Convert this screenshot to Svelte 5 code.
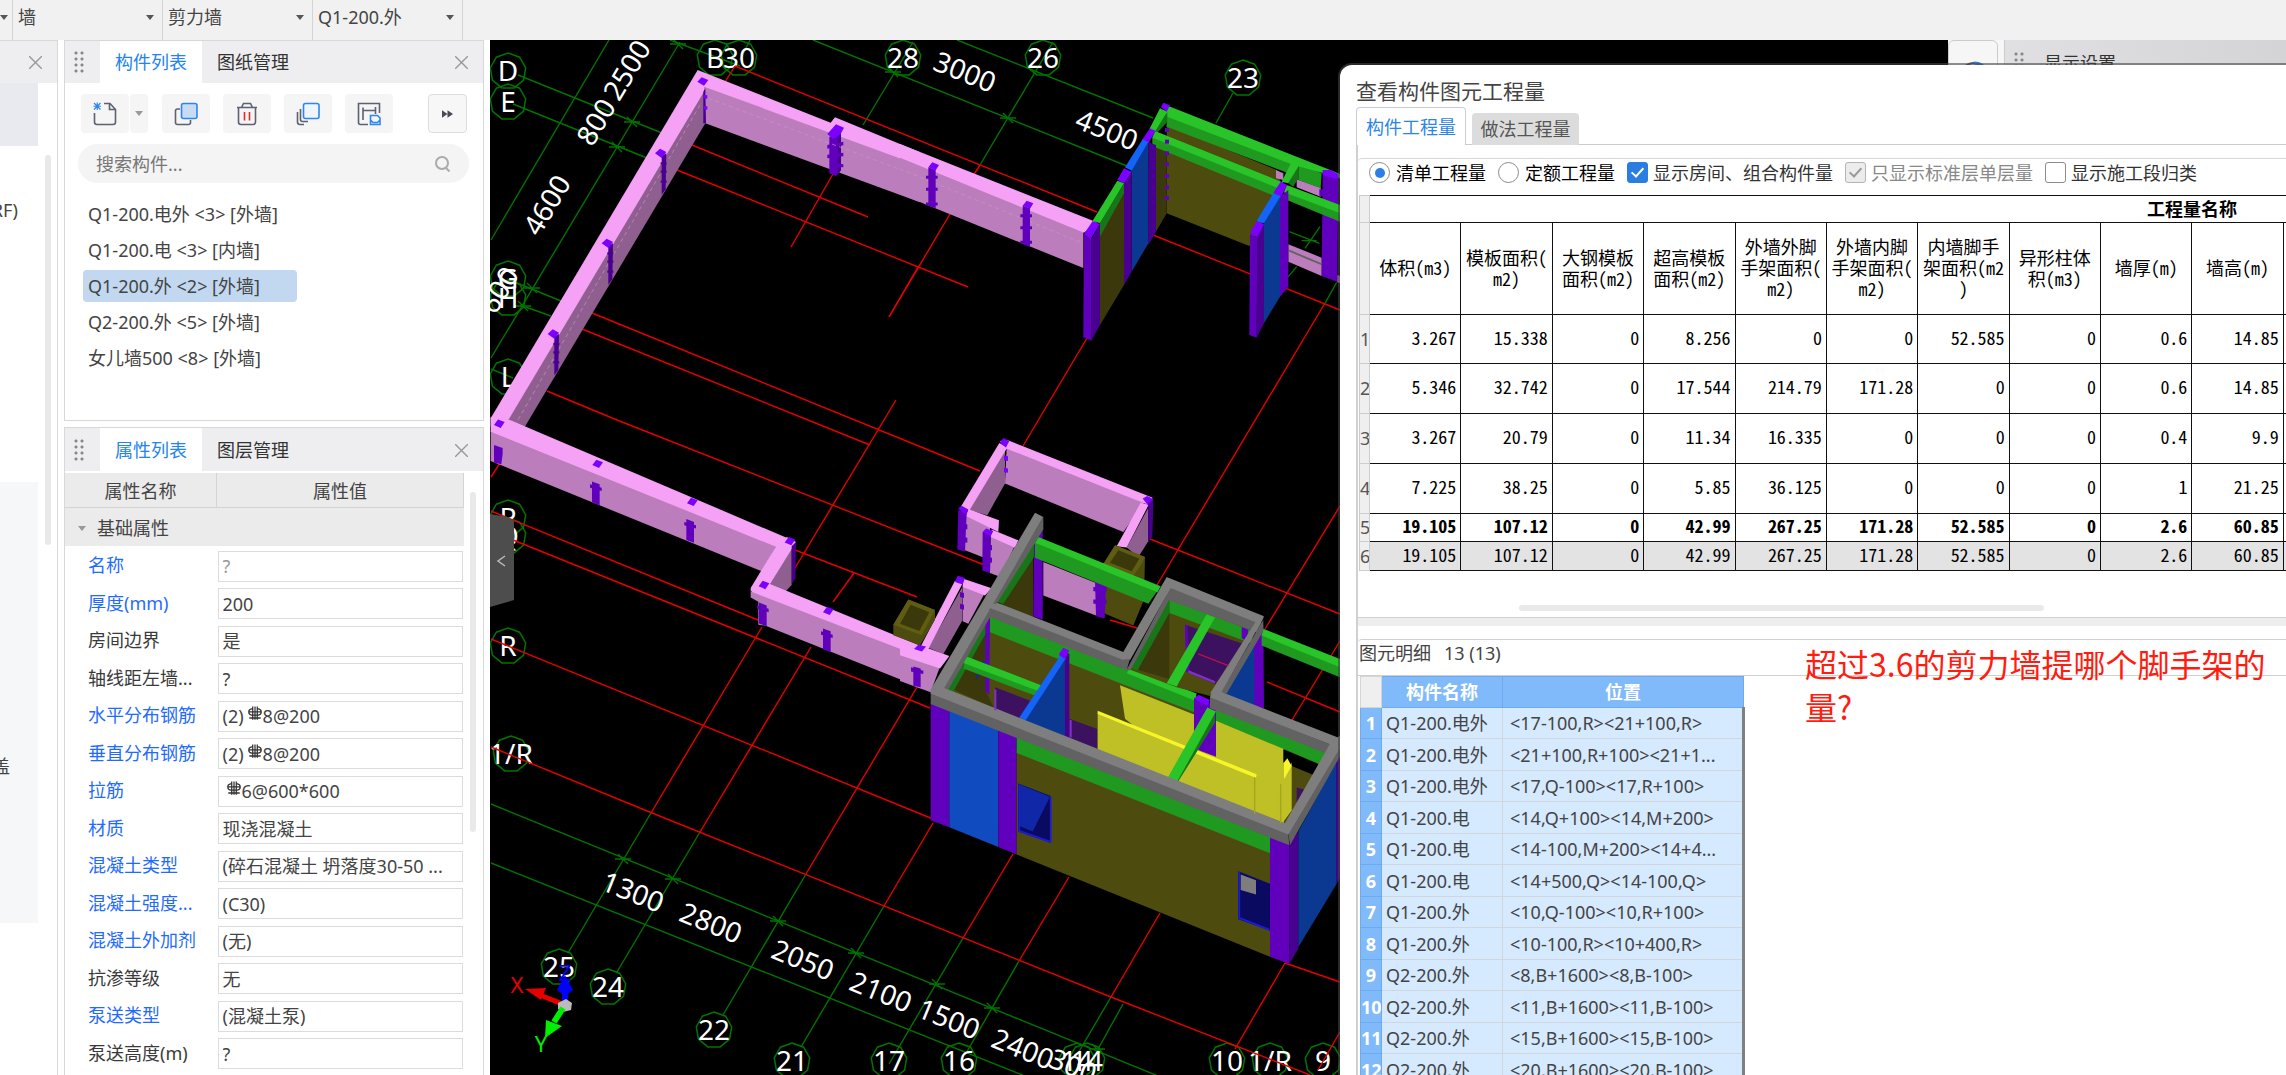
<script>
  const combos = ['墙', '剪力墙', 'Q1-200.外'];

  const components = [
    'Q1-200.电外 <3> [外墙]',
    'Q1-200.电 <3> [内墙]',
    'Q1-200.外 <2> [外墙]',
    'Q2-200.外 <5> [外墙]',
    '女儿墙500 <8> [外墙]',
  ];
  let selected = 2;

  const props = [
    { name: '名称', value: '?', blue: true, dim: true },
    { name: '厚度(mm)', value: '200', blue: true },
    { name: '房间边界', value: '是' },
    { name: '轴线距左墙...', value: '?' },
    { name: '水平分布钢筋', prefix: '(2)', rebar: true, value: '8@200', blue: true },
    { name: '垂直分布钢筋', prefix: '(2)', rebar: true, value: '8@200', blue: true },
    { name: '拉筋', rebar: true, value: '6@600*600', blue: true },
    { name: '材质', value: '现浇混凝土', blue: true },
    { name: '混凝土类型', value: '(碎石混凝土 坍落度30-50 ...', blue: true },
    { name: '混凝土强度...', value: '(C30)', blue: true },
    { name: '混凝土外加剂', value: '(无)', blue: true },
    { name: '抗渗等级', value: '无' },
    { name: '泵送类型', value: '(混凝土泵)', blue: true },
    { name: '泵送高度(m)', value: '?' },
    { name: '', value: '' },
  ];

  const heads = [
    ['体积(m3)'],
    ['模板面积(', 'm2)'],
    ['大钢模板', '面积(m2)'],
    ['超高模板', '面积(m2)'],
    ['外墙外脚', '手架面积(', 'm2)'],
    ['外墙内脚', '手架面积(', 'm2)'],
    ['内墙脚手', '架面积(m2', ')'],
    ['异形柱体', '积(m3)'],
    ['墙厚(m)'],
    ['墙高(m)'],
  ];
  const quantities = [
    ['3.267', '15.338', '0', '8.256', '0', '0', '52.585', '0', '0.6', '14.85'],
    ['5.346', '32.742', '0', '17.544', '214.79', '171.28', '0', '0', '0.6', '14.85'],
    ['3.267', '20.79', '0', '11.34', '16.335', '0', '0', '0', '0.4', '9.9'],
    ['7.225', '38.25', '0', '5.85', '36.125', '0', '0', '0', '1', '21.25'],
    ['19.105', '107.12', '0', '42.99', '267.25', '171.28', '52.585', '0', '2.6', '60.85'],
    ['19.105', '107.12', '0', '42.99', '267.25', '171.28', '52.585', '0', '2.6', '60.85'],
  ];

  const details = [
    ['Q1-200.电外', '<17-100,R><21+100,R>'],
    ['Q1-200.电外', '<21+100,R+100><21+1...'],
    ['Q1-200.电外', '<17,Q-100><17,R+100>'],
    ['Q1-200.电', '<14,Q+100><14,M+200>'],
    ['Q1-200.电', '<14-100,M+200><14+4...'],
    ['Q1-200.电', '<14+500,Q><14-100,Q>'],
    ['Q1-200.外', '<10,Q-100><10,R+100>'],
    ['Q1-200.外', '<10-100,R><10+400,R>'],
    ['Q2-200.外', '<8,B+1600><8,B-100>'],
    ['Q2-200.外', '<11,B+1600><11,B-100>'],
    ['Q2-200.外', '<15,B+1600><15,B-100>'],
    ['Q2-200.外', '<20,B+1600><20,B-100>'],
  ];

  // Axis grid: [x1, y1, x2, y2]
  const greenLines = [
    [609, 40, 491, 240], [680, 42, 491, 358], [518, 75, 662, 133], [513, 104, 647, 158],
    [512, 281, 561, 301], [520, 305, 551, 316], [491, 369, 513, 378], [670, 40, 740, 66],
    [813, 40, 1127, 166], [957, 40, 1153, 118], [1053, 42, 980, 165], [913, 42, 863, 125],
    [750, 40, 740, 60], [1233, 93, 1216, 123],
    [491, 804, 1163, 1078], [491, 863, 1025, 1076],
    [651, 813, 568, 953], [700, 832, 617, 972], [806, 874, 723, 1015], [884, 906, 801, 1047],
    [963, 938, 889, 1064], [1019, 961, 965, 1055], [1111, 997, 1077, 1055], [1123, 1004, 1097, 1051],
  ];
  const redLines = [
    [725, 82, 735, 66], [735, 66, 1097, 212], [692, 145, 868, 217], [677, 170, 968, 287],
    [833, 174, 791, 247], [980, 165, 973, 176], [950, 214, 889, 317], [918, 267, 889, 317],
    [592, 313, 980, 471], [1150, 539, 1340, 614], [582, 329, 870, 445], [547, 391, 617, 420],
    [617, 420, 987, 566], [1267, 682, 1340, 712], [795, 550, 917, 597], [896, 400, 795, 568],
    [762, 627, 651, 813], [854, 573, 833, 602], [811, 647, 700, 832], [917, 687, 806, 874],
    [933, 823, 884, 906], [1013, 854, 963, 938], [1069, 877, 1019, 961], [1160, 913, 1111, 997],
    [1285, 963, 1235, 1049], [1340, 1032, 1318, 1070], [491, 477, 500, 463], [491, 511, 758, 620],
    [513, 540, 930, 708], [491, 639, 933, 819], [491, 747, 652, 813], [652, 813, 1111, 997],
    [1111, 997, 1310, 1075], [1087, 338, 1023, 446], [1325, 303, 1157, 585], [1340, 506, 1265, 629],
    [1340, 641, 1292, 720], [1153, 235, 1340, 310], [1285, 963, 1340, 982], [1110, 620, 1137, 628],
  ];
  const ticks = [
    [632, 122], [617, 147], [532, 288], [523, 306], [678, 44], [893, 72], [1008, 118],
    [623, 859], [673, 879], [778, 921], [856, 953], [937, 984], [992, 1008], [1097, 1049],
  ];

  const axisLabels = [
    ['D', 508, 71], ['E', 508, 102], ['B', 715, 58], ['30', 739, 58], ['28', 903, 58], ['26', 1043, 58],
    ['23', 1243, 78], ['G', 508, 279], ['H', 508, 298], ['L', 508, 377], ['P', 508, 518], ['Q', 508, 536],
    ['R', 508, 646], ['1/R', 511, 754], ['25', 559, 967], ['24', 608, 987], ['22', 714, 1030],
    ['21', 792, 1061], ['17', 889, 1061], ['16', 959, 1061], ['14', 1077, 1061], ['14', 1087, 1061],
    ['10', 1227, 1061], ['1/R', 1270, 1061], ['9', 1323, 1061],
  ];
  const dimensions = [
    ['2500', 627, 70, -59], ['800', 596, 122, -59], ['4600', 547, 205, -59], ['600', 499, 290, -59],
    ['3000', 965, 72, 22], ['4500', 1107, 130, 22], ['1300', 633, 892, 22], ['2800', 711, 923, 22],
    ['2050', 803, 960, 22], ['2100', 881, 992, 22], ['1500', 949, 1019, 22], ['2400', 1023, 1049, 22],
    ['300', 1073, 1066, 22],
  ];

  const C = {
    pinkTop: '#f5a1f5', pink: '#bb7dbb', pinkDark: '#8f5f8f',
    violetTop: '#7b00ff', violet: '#6000bd', violetDark: '#490090',
    greenTop: '#28c428', green: '#1f991f', greenDark: '#187518',
    blueTop: '#1464fa', blue: '#104bc0', blueDark: '#0b3890',
    olive: '#4d4b0e', oliveDark: '#3b390b', oliveTop: '#5f5d12',
    grayTop: '#7e7e7e', gray: '#626262', yellow: '#bfbf26', yellowTop: '#f5f52a',
    window: '#0a0a60', pane: '#1027a8', glass: '#3c1260', black: '#000',
  };

  const backWalls = [
    ['pinkDark', '672,180 676,280 132,1195 78,1180'],
    ['pinkTop', '653,120 683,165 672,185 78,1182 32,1190 32,1165'],
    ['pink', '672,168 1320,405 1320,517 676,280'],
    ['pinkTop', '653,120 1052,278 1065,262 1320,367 1320,407 672,170'],
    ['violetDark', '670,185 676,175 678,280 670,280'],
    ['violetTop', '671,195 682,196 682,206 671,205'],
    ['violetTop', '671,228 682,229 682,239 671,238'],
    ['violet', '1048,320 1083,310 1083,420 1068,438 1048,430'],
    ['violetDark', '1073,315 1083,310 1083,420 1073,436'],
    ['violet', '1042,345 1090,335 1090,346 1042,356'],
    ['violet', '1042,374 1090,368 1090,379 1042,385'],
    ['violet', '1068,400 1090,403 1090,412 1068,410'],
    ['violetTop', '1042,312 1068,283 1092,293 1082,312 1060,327'],
  ];
  const backCaps = [[545, 370], [385, 640], [223, 912]];

  const rightWalls = [
    ['pink', '0,380 550,603 550,714 0,492'],
    ['pinkTop', '0,342 590,577 552,608 0,383'],
    ['olive', '800,285 1130,420 1150,480 1120,500 1095,560 1048,648 800,550'],
    ['oliveDark', '768,345 800,360 800,550 768,605'],
    ['pink', '1128,420 1150,430 1150,450 1128,445'],
    ['pink', '1190,448 1262,473 1262,500 1190,472'],
    ['pink', '1165,643 1265,683 1265,738 1165,695'],
    ['gray', '1165,658 1265,700 1265,706 1165,664'],
    ['pink', '1312,735 1320,738 1320,760 1312,757'],
    ['green', '800,255 1180,400 1165,430 800,290'],
    ['green', '1195,400 1265,430 1262,475 1195,450'],
    ['greenTop', '805,228 1285,418 1320,432 1320,445 1265,428 1180,405 795,258'],
    ['greenDark', '802,245 802,275 772,308 765,303'],
    ['greenTop', '780,235 802,245 765,305 748,298'],
    ['greenDark', '1195,405 1195,445 1180,470 1165,460'],
    ['greenTop', '1180,385 1202,398 1165,460 1145,455'],
    ['green', '757,322 1135,470 1120,497 757,348'],
    ['greenTop', '765,303 1150,458 1135,475 757,323'],
    ['violet', '1268,425 1315,435 1312,755 1265,738'],
    ['violet', '1258,478 1275,480 1275,500 1258,497'],
    ['violetTop', '1268,420 1290,420 1315,432 1312,448 1268,435'],
    ['green', '1155,485 1320,548 1320,575 1155,508'],
    ['greenTop', '1160,465 1320,525 1320,550 1152,487'],
    ['violetTop', '783,232 790,218 810,226 800,245'],
    ['violetDark', '745,337 768,345 768,605 745,645'],
    ['blueDark', '695,420 745,337 745,640 695,725'],
    ['violetDark', '672,460 695,422 695,725 672,765'],
    ['oliveDark', '672,485 672,765 600,885 600,615'],
    ['greenDark', '672,460 672,490 600,620 600,580'],
    ['violet', '552,612 575,627 575,932 550,922'],
    ['violetDark', '575,627 600,582 600,885 575,930'],
    ['violetTop', '726,330 750,295 767,303 745,340'],
    ['blueTop', '728,328 745,337 695,422 675,412'],
    ['violetTop', '672,415 695,425 672,460 652,450'],
    ['greenTop', '652,452 672,460 600,580 578,572'],
    ['violetTop', '578,573 600,582 572,627 552,612'],
    ['violet', '1140,500 1165,480 1165,770 1140,800'],
    ['blueDark', '1092,580 1140,497 1140,800 1092,880'],
    ['violetDark', '1072,622 1092,580 1092,880 1070,923'],
    ['violet', '1050,612 1072,622 1070,923 1048,915'],
    ['violetTop', '1142,455 1162,465 1143,500 1120,488'],
    ['blueTop', '1120,490 1142,498 1092,580 1070,573'],
    ['violetTop', '1070,573 1092,582 1072,622 1050,610'],
  ];
  const backPosts = [[97, 400], [380, 515]];
  const boltDots = [300, 335, 370, 403, 438, 472, 504];

  const frontWalls = [
    ['pink', '32,26 890,300 845,362 32,98'],
    ['pinkDark', '935,305 935,395 915,412 868,396'],
    ['pinkTop', '32,-8 90,0 920,282 890,304 32,28'],
    ['pink', '812,410 1320,563 1320,640 855,492 835,490 835,435 812,425'],
    ['pinkTop', '815,405 868,392 1320,540 1320,566 815,412'],
    ['pinkTop', '888,302 920,280 948,292 868,396 812,410 812,402'],
    ['violetDark', '935,302 948,292 946,378 935,393'],
    ['violet', '42,60 68,67 68,80 64,106 42,102'],
  ];
  const frontCaps = [[58, 9], [353, 105], [637, 196], [930, 290], [852, 395], [1045, 457], [1318, 550]];
  const frontPosts = [[347, 150], [630, 240], [848, 440], [1040, 502], [1312, 590]];

  const building = [
    ['pink', '320,65 735,195 670,268 315,152'],
    ['pinkDark', '315,68 315,152 262,228 205,215'],
    ['pinkTop', '300,50 322,48 758,186 742,202 318,68'],
    ['pinkTop', '298,55 322,66 207,218 182,208'],
    ['pinkDark', '745,210 745,290 715,328 680,305'],
    ['pinkTop', '722,198 746,203 680,305 650,302'],
    ['violetDark', '745,190 760,190 757,280 745,290'],
    ['violetTop', '728,188 742,182 760,190 742,202'],
    ['violetTop', '300,55 310,43 328,50 318,66'],
    ['violetTop', '312,85 324,87 324,98 312,97'],
    ['violetTop', '312,114 324,116 324,126 312,125'],
    ['pink', '195,226 270,250 270,335 195,312'],
    ['pinkTop', '205,213 297,240 295,268 198,230'],
    ['violet', '175,215 200,222 195,315 172,310'],
    ['violet', '190,248 202,250 202,262 190,260'],
    ['violet', '190,280 202,282 202,294 190,292'],
    ['violetTop', '175,212 185,205 205,214 198,228'],
    ['pink', '272,276 345,300 300,375 270,366'],
    ['pinkTop', '275,262 355,288 345,306 272,280'],
    ['violet', '248,268 272,270 270,366 247,360'],
    ['violet', '265,298 276,300 276,312 265,310'],
    ['violet', '265,328 276,330 276,342 265,340'],
    ['violetTop', '248,268 258,260 280,266 272,278'],
    ['pink', '430,340 588,390 588,468 430,420'],
    ['olive', '645,300 735,328 732,430 700,492 610,462 610,345'],
    ['oliveTop', '645,300 735,328 722,348 700,374 610,345'],
    ['oliveDark', '655,312 718,332 695,362 630,342'],
    ['violet', '585,385 618,395 614,475 588,470'],
    ['pinkDark', '187,400 187,480 130,560 85,545'],
    ['pink', '188,396 252,418 205,488 188,482'],
    ['pinkTop', '190,380 275,403 255,420 188,400'],
    ['pinkTop', '165,385 190,388 85,548 60,545'],
    ['violetTop', '165,388 173,373 195,378 188,394'],
    ['violet', '180,412 192,414 192,426 180,424'],
    ['violet', '180,440 192,442 192,454 180,452'],
    ['pink', '0,560 120,590 92,652 0,625'],
    ['pinkTop', '0,530 60,543 80,545 148,565 120,595 0,563'],
    ['violetTop', '42,548 55,538 78,542 66,554'],
    ['violet', '40,590 62,595 62,640 40,636'],
    ['violet', '33,592 70,600 70,608 33,602'],
    ['olive', '25,430 105,455 105,478 60,540 -20,515 -20,490'],
    ['oliveTop', '25,430 105,455 65,515 -20,490'],
    ['oliveDark', '32,442 88,460 58,505 0,488'],

    // interior of the main block
    ['oliveDark', '400,320 400,475 300,440'],
    ['greenDark', '405,290 405,325 310,440 285,435'],
    ['violet', '402,300 428,262 428,478 400,470'],
    ['green', '405,292 770,412 745,440 405,330'],
    ['greenTop', '415,280 782,398 772,413 405,294'],
    ['olive', '268,465 680,592 885,660 950,690 1300,780 1165,975 120,650'],
    ['oliveDark', '258,500 258,650 282,690 160,645'],
    ['pane', '225,625 245,580 258,575 258,590'],
    ['green', '270,470 885,660 885,700 270,508'],
    ['greenTop', '690,592 890,655 885,672 680,606'],
    ['greenDark', '265,465 265,500 160,650 135,645'],
    ['violet', '256,480 270,474 268,658 256,650'],
    ['glass', '285,640 400,675 360,716 285,696'],
    ['glass', '508,715 592,740 592,788 508,762'],
    ['yellow', '660,635 882,705 882,850 675,715'],
    ['yellow', '948,705 1152,785 1152,965 830,868 860,830'],
    ['green', '948,690 1280,798 1272,828 948,720'],
    ['black', '1150,788 1268,828 1248,852 1150,820'],
    ['yellow', '1140,870 1175,820 1175,935 1145,968'],
    ['yellowTop', '1152,820 1162,810 1175,828 1152,860'],
    ['glass', '1190,880 1215,885 1195,915 1190,915'],
    ['violet', '882,665 928,675 948,700 948,806 900,792 882,785'],
    ['violetTop', '882,668 895,658 930,670 922,684'],
    ['yellow', '593,700 1068,852 1068,942 593,792'],
    ['yellowTop', '593,696 1070,848 1068,857 593,704'],
    ['greenDark', '945,700 945,725 835,865 825,865'],
    ['greenTop', '922,688 948,698 830,868 802,858'],
    ['green', '195,580 420,648 412,662 190,595'],
    ['greenTop', '200,566 427,636 418,650 190,582'],
    ['blueDark', '495,568 495,762 375,728 370,720'],
    ['violetDark', '495,555 508,560 508,766 495,760'],
    ['blueTop', '480,565 498,570 376,720 358,712'],
    ['violetTop', '476,562 490,545 508,552 494,572'],
    ['olive', '808,430 1060,505 950,665 830,640 685,596'],
    ['oliveDark', '808,450 808,620 700,595'],
    ['glass', '855,490 1045,540 945,632 862,604'],
    ['violet', '855,490 863,492 868,604 858,602'],
    ['green', '808,430 1060,505 1055,535 808,462'],
    ['greenDark', '808,430 808,462 712,600 688,592'],
    ['greenTop', '920,465 945,473 830,638 800,630'],
    ['violet', '1025,495 1045,502 1040,530 1025,522'],
    ['blueDark', '1065,525 1065,688 960,655'],
    ['violet', '1063,520 1090,490 1092,690 1063,685'],
    ['green', '1085,512 1320,588 1320,616 1085,540'],
    ['greenTop', '1090,500 1320,572 1320,592 1085,516'],

    // parapet
    ['gray', '800,395 1085,485 1070,508 800,430'],
    ['gray', '815,395 815,420 692,598 680,598'],
    ['grayTop', '800,376 1092,470 1078,488 812,402 690,575 665,562'],
    ['gray', '1090,478 1090,505 980,655 960,655'],
    ['grayTop', '1068,482 1092,472 962,655 930,655'],
    ['gray', '270,450 668,572 690,572 680,598 665,595 270,472'],
    ['grayTop', '275,432 672,556 690,572 668,574 262,448'],
    ['gray', '930,662 1300,780 1285,800 930,690'],
    ['grayTop', '935,652 955,648 1320,762 1300,780 930,664'],
    ['gray', '430,232 430,262 290,440 275,440'],
    ['gray', '258,455 270,455 270,472 145,645 130,640'],
    ['grayTop', '405,222 430,232 128,648 92,645'],

    // facade
    ['violet', '92,675 148,690 148,975 92,958'],
    ['blue', '148,690 295,738 295,1022 148,975'],
    ['violet', '295,738 350,755 350,1040 295,1022'],
    ['olive', '350,790 1110,1030 1110,1285 350,1040'],
    ['green', '350,755 1110,995 1110,1037 350,797'],
    ['window', '355,870 452,900 452,1012 355,985'],
    ['pane', '358,872 450,902 398,985 358,972'],
    ['window', '1015,1080 1110,1110 1110,1222 1015,1195'],
    ['grayTop', '1022,1088 1068,1102 1068,1136 1022,1125'],
    ['violet', '1110,995 1168,1015 1168,1302 1110,1285'],
    ['violetDark', '1168,1015 1195,985 1195,1265 1168,1302'],
    ['blueDark', '1195,985 1310,815 1310,1110 1195,1262'],
    ['violetDark', '1310,815 1320,800 1320,1095 1310,1110'],
    ['gray', '92,652 1165,990 1168,1018 92,680'],
    ['gray', '1165,990 1320,775 1320,805 1170,1018'],
    ['grayTop', '92,645 128,640 1155,965 1290,775 1320,755 1320,785 1165,992 92,655'],
  ];

  // Nine-sided axis bubble
  function ring(x, y) {
    const pts = [];
    for (let i = 0; i < 9; i++) {
      const a = (i * 2 * Math.PI) / 9 - Math.PI / 2;
      pts.push(`${(x + Math.cos(a) * 18).toFixed(1)},${(y + Math.sin(a) * 18).toFixed(1)}`);
    }
    return pts.join(' ');
  }
</script>

<div class="app">
  <header class="topbar">
    <div class="combo stub"><i class="caret"></i></div>
    {#each combos as c}
      <div class="combo">
        <select aria-label={c}><option>{c}</option></select>
        <i class="caret"></i>
      </div>
    {/each}
  </header>

  <div class="main">
    <aside class="nav">
      <div class="bar"><button class="close" aria-label="关闭"><svg viewBox="0 0 12 12"><path d="M0 0L12 12M12 0L0 12" /></svg></button></div>
      <div class="nav-head"></div>
      <div class="nav-text floor">RF)</div>
      <div class="nav-block"><div class="nav-text">盖</div></div>
      <div class="thumb nav-thumb"></div>
    </aside>

    <div class="docks">
      <section class="dock list">
        <div class="bar">
          <span class="grip"></span>
          <button class="tab on">构件列表</button>
          <button class="tab">图纸管理</button>
          <button class="close" aria-label="关闭"><svg viewBox="0 0 12 12"><path d="M0 0L12 12M12 0L0 12" /></svg></button>
        </div>
        <div class="tools">
          <div class="split">
            <button class="tool" aria-label="新建">
              <svg viewBox="0 0 24 24">
                <path class="ink" d="M1.500 11V20a2.500 2.500 0 0 0 2.500 2.500H20a2.500 2.500 0 0 0 2.500-2.500V7.500L17 1.500H11" />
                <path class="ink" d="M16.500 2V7.500H22" />
                <path class="sky thin" d="M1 1L7.500 7.500M7.500 1L1 7.500M4.250 0.500V8M0.500 4.250H8" />
              </svg>
            </button>
            <button class="tool narrow" aria-label="更多"><i class="caret soft"></i></button>
          </div>
          <button class="tool" aria-label="复制">
            <svg viewBox="0 0 24 24">
              <path class="ink" d="M6 7H3.500A2 2 0 0 0 1.500 9V20.500a2 2 0 0 0 2 2H14.500a2 2 0 0 0 2-2V18" />
              <rect class="sky" x="7.500" y="1.500" width="15.500" height="15" rx="2" fill="#c7dbf3" />
            </svg>
          </button>
          <button class="tool" aria-label="删除">
            <svg viewBox="0 0 24 24">
              <path class="ink" d="M2 5.500H22M6.500 5.500L8.500 1.500H15.500L17.500 5.500M3.500 5.500V20a2.500 2.500 0 0 0 2.500 2.500H18a2.500 2.500 0 0 0 2.500-2.500V5.500" />
              <path class="red" d="M9.500 10V18.500M14.500 10V18.500" />
            </svg>
          </button>
          <button class="tool" aria-label="层间复制">
            <svg viewBox="0 0 24 24">
              <path class="ink" d="M1.500 10V20a2.500 2.500 0 0 0 2.500 2.500H8M4.500 7V17.500a2 2 0 0 0 2 2H12" />
              <rect class="sky" x="7.500" y="1.500" width="15.500" height="15" rx="2" fill="#eef5ff" />
            </svg>
          </button>
          <button class="tool" aria-label="存档">
            <svg viewBox="0 0 24 24">
              <path class="ink" d="M11 22.500H3.500a2 2 0 0 1-2-2V1.500H22.500V11M6 5.500V18M18.500 5V12M6 8.500H18.500" />
              <path class="sky" d="M13.500 13.500H20.500L23 16V22.500H13.500ZM13.500 18L16 20.500H20.500L23 18" />
            </svg>
          </button>
          <button class="tool more" aria-label="展开">
            <svg viewBox="0 0 12 8"><path d="M0 0L6 4L0 8ZM6 0L12 4L6 8Z" fill="#4a4a55" /></svg>
          </button>
        </div>
        <label class="search">
          <input type="text" placeholder="搜索构件..." aria-label="搜索构件" />
          <svg viewBox="0 0 16 16"><circle cx="7" cy="7" r="6" /><path d="M11 12L14.500 15.500" /></svg>
        </label>
        <ul>
          {#each components as c, i}
            <li><button class:picked={i === selected} on:click={() => (selected = i)}>{c}</button></li>
          {/each}
        </ul>
      </section>

      <section class="dock attrs">
        <div class="bar">
          <span class="grip"></span>
          <button class="tab on">属性列表</button>
          <button class="tab">图层管理</button>
          <button class="close" aria-label="关闭"><svg viewBox="0 0 12 12"><path d="M0 0L12 12M12 0L0 12" /></svg></button>
        </div>
        <table class="props">
          <thead>
            <tr><th class="k">属性名称</th><th>属性值</th></tr>
          </thead>
          <tbody>
            <tr class="group"><td colspan="2"><i class="caret soft"></i>基础属性</td></tr>
            {#each props as p, i}
              <tr>
                <td class="name" class:blue={p.blue}><label for="prop{i}">{p.name}</label></td>
                <td>
                  <div class="value" class:dim={p.dim}>
                    {#if p.prefix}<span>{p.prefix}</span>{/if}
                    {#if p.rebar}
                      <svg viewBox="0 0 14 14"><path d="M5 2.500H4A3 2.800 0 0 0 4 8H10A3 2.800 0 0 0 10 2.500H9M5 0.500V12M9 0.500V12M7 0.500V12M2 5.200H12M2 10.500H12" /></svg>
                    {/if}
                    <input id="prop{i}" type="text" value={p.value} />
                  </div>
                </td>
              </tr>
            {/each}
          </tbody>
        </table>
        <div class="thumb attrs-thumb"></div>
      </section>
    </div>

    <div class="scene">
      <svg class="model" viewBox="490 40 1458 1035" preserveAspectRatio="xMinYMin slice">
        <g stroke="#007400" stroke-width="1.400">
          {#each greenLines as l}
            <line x1={l[0]} y1={l[1]} x2={l[2]} y2={l[3]} />
          {/each}
          {#each ticks as t}
            <path d="M{t[0] - 8} {t[1]}H{t[0] + 8}M{t[0] - 5} {t[1] - 5}L{t[0] + 5} {t[1] + 5}" />
          {/each}
        </g>
        <g fill="none" stroke="#007400" stroke-width="1.500">
          {#each axisLabels as l}
            <polygon points={ring(l[1], l[2])} />
          {/each}
        </g>
        <g class="labels">
          {#each axisLabels as l}
            <text x={l[1]} y={l[2] + 10}>{l[0]}</text>
          {/each}
          {#each dimensions as d}
            <text transform="translate({d[1]} {d[2]}) rotate({d[3]})" y="10">{d[0]}</text>
          {/each}
        </g>
        <g stroke="#e60000" stroke-width="1.400">
          {#each redLines as l}
            <line x1={l[0]} y1={l[1]} x2={l[2]} y2={l[3]} />
          {/each}
        </g>

        <!-- far walls -->
        <g transform="translate(480 30) scale(0.33333)">
          {#each backWalls as [c, pts]}
            <polygon points={pts} fill={C[c]} />
          {/each}
          <path d="M660 225L105 1185M685 205L1320 440" class="seam" />
          {#each backCaps as [x, y]}
            <polygon points="{x},{y + 8} {x + 14},{y} {x + 12},{y + 108} {x},{y + 124}" fill={C.violetDark} />
            <path d="M{x - 3} {y + 30}H{x + 15}M{x - 3} {y + 55}H{x + 15}M{x - 3} {y + 85}H{x + 15}" stroke={C.violetDark} stroke-width="7" />
            <polygon points="{x - 20},{y} {x - 5},{y - 14} {x + 14},{y - 4} {x},{y + 14}" fill={C.violetTop} />
          {/each}
          <polygon points="652,155 665,142 685,150 672,167" fill={C.violetTop} />
        </g>
        <g transform="translate(900 30) scale(0.33333)">
          {#each rightWalls as [c, pts]}
            <polygon points={pts} fill={C[c]} />
          {/each}
          <path d="M0 417L550 640" class="seam" />
          {#each backPosts as [x, y]}
            <polygon points="{x - 12},{y + 12} {x + 10},{y + 20} {x + 10},{y + 135} {x - 12},{y + 127}" fill={C.violet} />
            <path d="M{x - 19} {y + 42}H{x + 16}M{x - 19} {y + 78}H{x + 16}M{x - 19} {y + 122}H{x + 16}" stroke={C.violet} stroke-width="9" />
            <polygon points="{x - 12},{y + 12} {x},{y - 3} {x + 20},{y + 5} {x + 10},{y + 21}" fill={C.violetTop} />
          {/each}
          {#each boltDots as y}
            <rect x="795" y={y - 6} width="12" height="12" fill={C.violet} />
          {/each}
          <path d="M1168 605L1258 640M1260 590L1215 655M1190 710L1165 740M1310 757L1275 820M1205 632H1250" stroke="#007400" stroke-width="4" />
        </g>

        <!-- near walls -->
        <g transform="translate(480 420) scale(0.33333 0.41773)">
          {#each frontWalls as [c, pts]}
            <polygon points={pts} fill={C[c]} />
          {/each}
          {#each frontCaps as [x, y]}
            <polygon points="{x - 16},{y + 3} {x - 4},{y - 10} {x + 16},{y - 4} {x + 4},{y + 10}" fill={C.violetTop} />
          {/each}
          {#each frontPosts as [x, y]}
            <polygon points="{x - 11},{y - 3} {x + 12},{y + 4} {x + 12},{y + 54} {x - 11},{y + 47}" fill={C.violet} />
            <polygon points="{x - 17},{y + 4} {x + 18},{y + 12} {x + 18},{y + 20} {x - 17},{y + 12}" fill={C.violet} />
          {/each}
        </g>
        <g transform="translate(900 420) scale(0.33333 0.41773)">
          {#each building as [c, pts]}
            <polygon points={pts} fill={C[c]} />
          {/each}
          <path d="M580 405H620M580 435H620" stroke={C.violet} stroke-width="10" />
          <path d="M358 872V984L452 1010M452 902V1010M1018 1082V1192L1108 1220" fill="none" stroke="#1a1ae0" stroke-width="5" />
          <path d="M895 560L985 588" stroke="#c0104a" stroke-width="3" />
          <path d="M865 602L945 628M286 645V695M512 718V760" stroke="#8030c8" stroke-width="6" />
          <path d="M1064 855V942M1142 872V965" stroke="#a5a51e" stroke-width="4" />
        </g>

        <!-- axis triad -->
        <path d="M565 1005L535 993" stroke="#e60000" stroke-width="5" />
        <polygon points="525,989 546,988 541,1000" fill="#e60000" />
        <path d="M565 1003V990" stroke="#0000ff" stroke-width="6" />
        <polygon points="565,975 573,990 565,996 557,990" fill="#0000ff" />
        <polygon points="558,1003 566,999 572,1003 571,1010 563,1012 558,1009" fill="#bbb" />
        <path d="M563 1008L554 1022" stroke="#00f000" stroke-width="6" />
        <polygon points="545,1038 546,1020 562,1026" fill="#00f000" />
        <g class="triad">
          <text x="517" y="993" fill="#e60000">X</text>
          <text x="541" y="1052" fill="#00f000">Y</text>
          <text x="565" y="981" fill="#0000ff">Z</text>
        </g>

        <polygon points="490,514 508,517 514,521 514,600 490,607" fill="#4d4d4d" />
        <path d="M505 556L498 561L505 566" fill="none" stroke="#bbb" stroke-width="1.500" />
      </svg>
    </div>

    <aside class="display">
      <div class="cube"><svg viewBox="0 0 30 30"><circle cx="15" cy="15" r="13" fill="none" stroke="#556" stroke-width="2" /><path d="M15 2A13 13 0 0 1 27 9" fill="none" stroke="#2f7fe0" stroke-width="3" /></svg></div>
      <div class="settings"><span class="grip"></span>显示设置</div>
    </aside>
  </div>

  <section class="dialog">
    <h1>查看构件图元工程量</h1>
    <div class="pages">
      <button class="page on">构件工程量</button>
      <button class="page">做法工程量</button>
    </div>
    <div class="sheet">
      <div class="options">
        <label class="strong"><input type="radio" name="kind" checked />清单工程量</label>
        <label class="strong"><input type="radio" name="kind" />定额工程量</label>
        <label><input type="checkbox" checked />显示房间、组合构件量</label>
        <label class="off"><input type="checkbox" checked disabled />只显示标准层单层量</label>
        <label><input type="checkbox" />显示施工段归类</label>
      </div>
      <div class="scroller">
        <table class="qty">
          <colgroup>
            <col class="no" />
            {#each Array(18) as _}<col />{/each}
          </colgroup>
          <thead>
            <tr class="cap"><td class="no"></td><th colspan="18">工程量名称</th></tr>
            <tr class="heads">
              <td class="no"></td>
              {#each heads as h}
                <th>{#each h as line}<div>{line}</div>{/each}</th>
              {/each}
              <th colspan="8"></th>
            </tr>
          </thead>
          <tbody>
            {#each quantities as row, i}
              <tr class:total={i === 4} class:grand={i === 5}>
                <td class="no">{i + 1}</td>
                {#each row as v}<td>{v}</td>{/each}
                <td colspan="8"></td>
              </tr>
            {/each}
          </tbody>
        </table>
        <div class="hthumb"></div>
      </div>
      <div class="splitter"></div>
      <div class="detail">
        <h2><span>图元明细</span><span>13 (13)</span></h2>
        <table class="items">
          <thead>
            <tr><td class="corner"></td><th class="c1">构件名称</th><th>位置</th></tr>
          </thead>
          <tbody>
            {#each details as d, i}
              <tr><th>{i + 1}</th><td>{d[0]}</td><td class="pos">{d[1]}</td></tr>
            {/each}
          </tbody>
        </table>
      </div>
    </div>
    <p class="note">超过3.6的剪力墙提哪个脚手架的量?</p>
  </section>
</div>

<style>
  :global(body) { margin: 0; background: #fff; }

  .app {
    position: relative;
    display: flex;
    flex-direction: column;
    height: 100vh;
    overflow: hidden;
    font: 18px/24px "Noto Sans", "Noto Sans CJK SC", sans-serif;
    color: #444;
  }

  button, input, select {
    font: inherit;
    color: inherit;
    border: 0;
    padding: 0;
    margin: 0;
    background: none;
  }

  .topbar {
    display: flex;
    height: 40px;
    flex: none;
    background: #f1f1f1;
  }

  .combo {
    box-sizing: border-box;
    display: flex;
    align-items: center;
    width: 150px;
    padding: 0 8px 6px 5px;
    border-right: 1px solid #d4d4d4;
  }

  .combo.stub { width: 13px; padding-left: 0; }
  .combo select { flex: 1; appearance: none; outline: 0; }

  .caret {
    border: 4px solid transparent;
    border-top: 5px solid #555;
    border-bottom: 0;
  }

  .caret.soft { border-top-color: #999; }

  .main { display: flex; flex: 1; min-height: 0; }

  .nav {
    position: relative;
    box-sizing: border-box;
    width: 58px;
    flex: none;
    border-right: 1px solid #d8d8d8;
    border-top: 1px solid #d8d8d8;
  }

  .bar {
    display: flex;
    align-items: stretch;
    height: 42px;
    background: #eeeef0;
  }

  .close { margin-left: auto; width: 44px; }
  .close svg { width: 13px; height: 13px; stroke: #999; stroke-width: 1.3; }
  .nav-head { width: 38px; height: 63px; background: #e9eaef; }
  .nav-text { display: flex; justify-content: flex-end; width: 18px; white-space: nowrap; }
  .floor { margin-top: 52px; }
  .nav-block { box-sizing: border-box; width: 38px; height: 441px; margin-top: 260px; padding-top: 272px; background: #f6f7f9; }
  .nav-block .nav-text { width: 10px; }

  .thumb { position: absolute; width: 6px; border-radius: 3px; background: #e9e9ea; }
  .nav-thumb { top: 114px; right: 6px; height: 390px; }
  .attrs-thumb { top: 64px; right: 7px; height: 340px; }

  .docks {
    display: flex;
    flex-direction: column;
    gap: 6px;
    width: 420px;
    flex: none;
    margin: 0 6px;
  }

  .dock { position: relative; box-sizing: border-box; border: 1px solid #d8d8d8; }
  .list { height: 381px; flex: none; }
  .attrs { flex: 1; min-height: 0; overflow: hidden; border-bottom: 0; }
  .attrs .bar { height: 43px; margin-bottom: 2px; }

  .grip {
    align-self: center;
    width: 12px;
    height: 24px;
    margin: 0 15px 0 8px;
    background: radial-gradient(circle, #888 1px, transparent 2px) 0 0 / 6px 6px;
  }

  .tab { width: 102px; color: #333; }
  .tab.on { background: #fff; color: #2383f0; }

  .tools { display: flex; height: 39px; margin: 11px 16px 0; }
  .tool { width: 48px; margin-right: 13px; border-radius: 4px; background: #f5f5f5; }
  .tool svg { display: block; width: 24px; height: 24px; margin: auto; fill: none; }
  .split { display: flex; margin-right: 14px; }
  .split .tool { margin-right: 1px; }
  .split .narrow { width: 18px; margin: 0; display: flex; align-items: center; justify-content: center; }
  .tool.more { width: 39px; margin: 0 0 0 auto; border: 1px solid #ddd; background: #f7f7f7; }
  .tool.more svg { width: 11px; height: 8px; }
  .ink { stroke: #5c6272; stroke-width: 1.6; }
  .sky { stroke: #2f86ee; stroke-width: 1.6; }
  .sky.thin { stroke-width: 1.2; }
  .red { stroke: #dd2c2c; stroke-width: 1.6; }

  .search {
    display: flex;
    align-items: center;
    height: 39px;
    margin: 11px 14px 13px 13px;
    padding: 0 18px;
    border-radius: 20px;
    background: #f4f4f4;
  }

  .search input { flex: 1; outline: 0; }
  .search input::placeholder { color: #777; opacity: 1; }
  .search svg { width: 16px; height: 16px; fill: none; stroke: #aaa; stroke-width: 2; }

  ul { list-style: none; margin: 0; padding: 0 18px; }
  li { display: flex; align-items: center; height: 36px; }
  li button { width: 214px; height: 32px; padding: 0 5px; text-align: left; border-radius: 4px; white-space: nowrap; }
  li .picked { background: #c1d8f0; }

  .props { width: 399px; table-layout: fixed; border-collapse: collapse; }
  .props th, .props td { padding: 0; font-weight: normal; }
  .props th { height: 32px; padding-top: 2px; background: #ebebeb; border-right: 1px solid #d4d4d4; border-bottom: 1px solid #d4d4d4; }
  .props .k { width: 151px; }
  .props .group td { height: 35px; padding-top: 2px; background: #ebebeb; }
  .group .caret { display: inline-block; margin: 0 11px 4px 13px; }
  .props tbody tr { height: 37px; }
  .props tbody tr:nth-child(odd) { height: 38px; }
  .props .name { padding: 2px 0 0 23px; color: #3a3a3a; white-space: nowrap; }
  .props .name.blue { color: #1f6bff; }

  .value {
    box-sizing: border-box;
    display: flex;
    align-items: center;
    height: 31px;
    margin: 5px 1px 1px;
    padding: 0 4px;
    border: 1px solid #dcdcdc;
  }

  .value.dim { color: #999; }
  .value input { flex: 1; min-width: 0; outline: 0; }
  .value svg { width: 16px; height: 16px; margin: 0 0 4px 3px; fill: none; stroke: #333; stroke-width: 1.1; }

  .scene { flex: 1; min-width: 0; background: #000; }
  .model { display: block; width: 100%; height: 100%; }
  .labels { font-size: 28px; fill: #fff; text-anchor: middle; }
  .triad { font-size: 22px; text-anchor: middle; }
  .seam { stroke: #cf93cf; stroke-width: 2; stroke-dasharray: 12 10; fill: none; }

  .display { display: flex; width: 338px; flex: none; background: #f6f6f6; }
  .cube { box-sizing: border-box; width: 50px; height: 80px; margin-right: 6px; padding: 20px 10px; border: 1px solid #ccc; border-radius: 6px; }
  .cube svg { width: 30px; height: 30px; }
  .settings { display: flex; flex: 1; align-items: center; height: 42px; padding-top: 2px; background: linear-gradient(90deg, #e0e0e2, #d4d4d6); border-left: 1px solid #ccc; color: #333; }
  .settings .grip { margin-right: 19px; }

  .dialog {
    position: absolute;
    top: 65px;
    left: 1340px;
    right: 0;
    bottom: 0;
    display: flex;
    flex-direction: column;
    padding-left: 16px;
    overflow: hidden;
    border-radius: 12px 0 0 0;
    background: #fff;
    box-shadow: 0 0 0 2px rgba(70, 70, 70, 0.6);
  }

  h1 { flex: none; height: 29px; margin: 13px 0 0; font: 21px/25px "Noto Sans CJK SC", sans-serif; color: #444; }

  .pages { display: flex; align-items: flex-end; gap: 6px; height: 38px; flex: none; box-shadow: inset 0 -1px #c9cdd2; }
  .page { width: 107px; height: 32px; border-radius: 4px 4px 0 0; background: #dcdcdc; color: #555; }
  .page.on { box-sizing: border-box; width: 110px; height: 38px; border: 1px solid #c9cdd2; border-bottom: 0; background: #fff; color: #2b85e8; }

  .sheet { flex: 1; min-height: 0; padding-top: 13px; border-left: 2px solid #cdd1d6; }

  .options {
    display: flex;
    align-items: center;
    height: 37px;
    padding-left: 11px;
    padding-bottom: 9px;
    border-top: 1px solid #d8d8d8;
    border-radius: 4px 0 0 0;
    gap: 12px;
    box-sizing: border-box;
  }

  .options label { display: flex; align-items: center; gap: 5px; white-space: nowrap; color: #333; }
  .options .strong { color: #000; gap: 6px; }
  .options .off { color: #888; }

  .options input {
    appearance: none;
    box-sizing: border-box;
    display: flex;
    align-items: center;
    justify-content: center;
    width: 21px;
    height: 21px;
    border: 1px solid #8c8c8c;
    border-radius: 3px;
    background: #fff;
  }

  .options input[type='radio'] { border-radius: 50%; }
  .options input[type='radio']:checked::after { content: ''; width: 10px; height: 10px; border-radius: 50%; background: #2a80e6; }
  .options input[type='checkbox']:checked { background: #2a7de1; border-color: #2a7de1; }
  .options input[type='checkbox']:checked::after { content: ''; width: 5px; height: 10px; margin-bottom: 3px; border: solid #fff; border-width: 0 2px 2px 0; transform: rotate(42deg); }
  .options input[type='checkbox']:disabled { background: #ececec; border-color: #b4b4b4; }
  .options input[type='checkbox']:disabled::after { border-color: #999; }

  .scroller { height: 422px; overflow: hidden; border-bottom: 1px solid #d0d0d0; padding-left: 1px; }

  .qty {
    width: 1656px;
    table-layout: fixed;
    border-collapse: collapse;
    font: 18px/21px "Noto Sans CJK SC", sans-serif;
    font-feature-settings: "hwid";
    color: #000;
  }

  .qty col.no { width: 10px; }
  .qty th, .qty td { padding: 0 4px 4px 0; border: 1px solid #111; text-align: right; font-weight: normal; }
  .qty th { padding: 0 0 2px; text-align: center; white-space: nowrap; }
  .qty .cap th { font-weight: bold; }
  .qty .no { padding: 0; overflow: hidden; border-color: #ccc; background: #efefef; text-align: left; font-family: "Noto Sans", sans-serif; font-weight: normal; color: #555; }
  .qty tr { height: 50px; }
  .qty tbody tr:first-child { height: 49px; }
  .qty .cap { height: 27px; }
  .qty .heads { height: 92px; }
  .qty tbody .total { height: 28px; font-weight: bold; }
  .qty .total td { font-weight: bold; }
  .qty .total .no { font-weight: normal; }
  .qty tbody .grand { height: 29px; background: #e3e3e3; }

  .hthumb { width: 525px; height: 6px; margin: 34px 0 0 160px; border-radius: 3px; background: #e9e9e9; }
  .splitter { height: 8px; background: #eee; }

  .detail { margin-top: 13px; border-top: 1px solid #d0d0d0; border-radius: 4px 0 0 0; }
  h2 { display: flex; gap: 13px; height: 30px; margin: 0; padding: 1px 0 4px 1px; font: inherit; border-bottom: 1px solid #d0d0d0; }

  .items { width: 385px; margin-left: 2px; table-layout: fixed; border-collapse: collapse; }
  .items th, .items td { padding: 0; border: 1px solid #d2d6da; white-space: nowrap; overflow: hidden; }
  .items th { background: #80bafa; border-color: #6cabf0; color: #fff; font-weight: bold; }
  .items .corner { width: 20px; background: #efefef; }
  .items .c1 { width: 120px; }
  .items thead tr { height: 31px; }
  .items tbody tr { height: 31px; }
  .items tbody tr:nth-child(even) { height: 32px; }
  .items tbody td { padding-left: 4px; background: #d5e9ff; }
  .items tbody .pos { padding-left: 7px; border-right: 3px solid #808080; }

  .note {
    position: absolute;
    top: 577px;
    left: 465px;
    width: 472px;
    margin: 0;
    font: 32px/43px "Noto Sans CJK SC", sans-serif;
    color: #ff1c10;
  }
</style>
